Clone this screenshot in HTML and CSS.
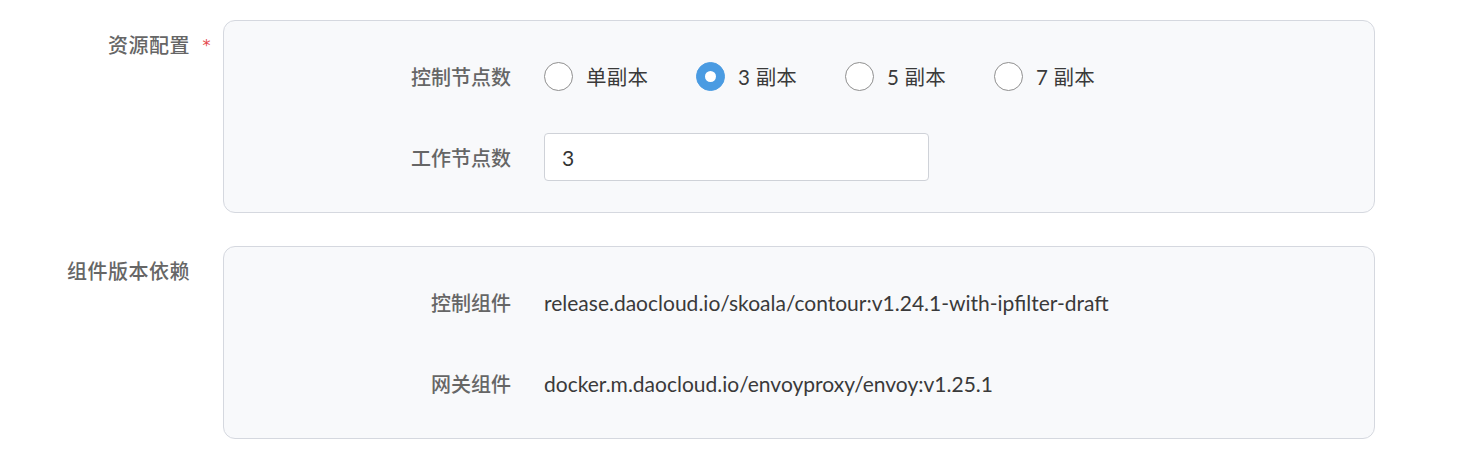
FILE: index.html
```html
<!DOCTYPE html>
<html lang="zh">
<head>
<meta charset="utf-8">
<link rel="stylesheet" href="styles.css">
</head>
<body>
<div class="form">
  <div class="item">
    <div class="item-label">资源配置</div>
    <div class="item-star">*</div>
    <div class="panel">
      <div class="row">
        <div class="row-label">控制节点数</div>
        <div class="radios">
          <label class="radio"><span class="dot"></span><span class="rtext">单副本</span></label>
          <label class="radio checked"><span class="dot"></span><span class="rtext">3 副本</span></label>
          <label class="radio"><span class="dot"></span><span class="rtext">5 副本</span></label>
          <label class="radio"><span class="dot"></span><span class="rtext">7 副本</span></label>
        </div>
      </div>
      <div class="row">
        <div class="row-label">工作节点数</div>
        <div class="input">3</div>
      </div>
    </div>
  </div>
  <div class="item">
    <div class="item-label">组件版本依赖</div>
    <div class="item-star"></div>
    <div class="panel">
      <div class="row">
        <div class="row-label">控制组件</div>
        <div class="value">release.daocloud.io/skoala/contour:v1.24.1-with-ipfilter-draft</div>
      </div>
      <div class="row">
        <div class="row-label">网关组件</div>
        <div class="value">docker.m.daocloud.io/envoyproxy/envoy:v1.25.1</div>
      </div>
    </div>
  </div>
</div>
</body>
</html>
```
FILE: styles.css
```css
html, body {
  margin: 0;
  padding: 0;
  background: #ffffff;
}
body {
  font-family: Lato, "Noto Sans CJK SC", sans-serif;
  font-size: 20px;
  color: #333;
}
.form {
  padding-top: 20px;
  display: flex;
  flex-direction: column;
  gap: 33px;
}
.item {
  display: flex;
  align-items: flex-start;
}
.item-label {
  width: 190px;
  text-align: right;
  color: #666;
  font-weight: 500;
  line-height: 50px;
  letter-spacing: 0.5px;
}
.item-star {
  width: 33px;
  color: #e5484d;
  font-size: 16px;
  line-height: 52px;
  text-align: center;
  font-family: "DejaVu Sans", sans-serif;
}
.panel {
  width: 1150px;
  box-sizing: content-box;
  border: 1px solid #d5d8df;
  border-radius: 12px;
  background: #f8f9fb;
  padding: 31px 0;
  display: flex;
  flex-direction: column;
  gap: 33px;
}
.row {
  display: flex;
  align-items: center;
  height: 48px;
}
.row-label {
  width: 287px;
  text-align: right;
  color: #666;
  font-weight: 500;
  margin-right: 33px;
  flex: none;
}
.radios {
  display: flex;
  align-items: center;
  gap: 48px;
}
.radio {
  display: flex;
  align-items: center;
  gap: 13px;
  color: #3a3a3a;
}
.rtext {
  font-size: 20.5px;
  letter-spacing: 0.2px;
}
.dot {
  width: 27px;
  height: 27px;
  border: 1px solid #8f8f8f;
  border-radius: 50%;
  background: #fff;
  box-sizing: content-box;
  display: flex;
  align-items: center;
  justify-content: center;
}
.radio.checked .dot {
  background: #4a9be2;
  border-color: #4a9be2;
}
.radio.checked .dot::after {
  content: "";
  width: 11px;
  height: 11px;
  border-radius: 50%;
  background: #fff;
}
.input {
  width: 366px;
  height: 46px;
  border: 1px solid #cfd2d8;
  border-radius: 4px;
  background: #fff;
  padding: 0 0 0 17px;
  display: flex;
  align-items: center;
  color: #333;
  font-size: 21px;
}
.value {
  color: #3a3a3a;
  font-size: 21px;
}
```
